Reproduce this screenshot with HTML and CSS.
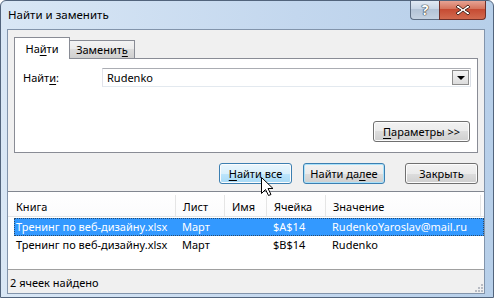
FILE: index.html
```html
<!DOCTYPE html>
<html lang="ru">
<head>
  <meta charset="UTF-8">
  <title>Найти и заменить</title>
  <link rel="stylesheet" href="styles.css">
</head>
<body>

<div class="window">
  <!-- Title bar -->
  <div class="titlebar">
    <span class="title">Найти и заменить</span>
    <div class="caption-buttons">
      <span class="cap-help">?</span>
      <span class="cap-close">
        <svg width="16" height="12" viewBox="0 0 16 12">
          <path d="M3 1 L8 5 L13 1 L15 3 L10 6 L15 9 L13 11 L8 7 L3 11 L1 9 L6 6 L1 3 Z" fill="#fff" stroke="#4b2a22" stroke-width="1"/>
        </svg>
      </span>
    </div>
  </div>

  <!-- Client area -->
  <div class="client">
    <div class="tabs-area">
      <div class="tab-strip">
        <div class="tab active">На<u>й</u>ти</div>
        <div class="tab">Заменит<u>ь</u></div>
      </div>
      <div class="tab-panel">
        <div class="find-row">
          <label class="find-label">Найт<u>и</u>:</label>
          <div class="combo">
            <span class="combo-text">Rudenko</span>
            <span class="combo-arrow"></span>
          </div>
        </div>
        <div class="options-row">
          <button class="btn btn-options"><u>П</u>араметры &gt;&gt;</button>
        </div>
      </div>
    </div>

    <div class="actions">
      <button class="btn btn-hover btn-find-all"><u>Н</u>айти все</button>
      <button class="btn btn-default btn-find-next">Найти да<u>л</u>ее</button>
      <button class="btn btn-close">Закрыть</button>
    </div>

    <!-- Results -->
    <div class="results">
      <div class="results-head">
        <div class="hcell c1">Книга</div>
        <div class="hcell">Лист</div>
        <div class="hcell">Имя</div>
        <div class="hcell">Ячейка</div>
        <div class="hcell">Значение</div>
        <div class="hcell filler"></div>
      </div>
      <div class="row selected">
        <div class="cell c1">Тренинг по веб-дизайну.xlsx</div>
        <div class="cell">Март</div>
        <div class="cell"></div>
        <div class="cell">$A$14</div>
        <div class="cell">RudenkoYaroslav@mail.ru</div>
      </div>
      <div class="row">
        <div class="cell c1">Тренинг по веб-дизайну.xlsx</div>
        <div class="cell">Март</div>
        <div class="cell"></div>
        <div class="cell">$B$14</div>
        <div class="cell">Rudenko</div>
      </div>
    </div>

    <div class="status">
      <span>2 ячеек найдено</span>
      <svg class="grip" width="9" height="9" viewBox="0 0 9 9">
        <rect x="7" y="1" width="2" height="2" fill="#b8bcc4"/>
        <rect x="4" y="4" width="2" height="2" fill="#b8bcc4"/>
        <rect x="7" y="4" width="2" height="2" fill="#b8bcc4"/>
        <rect x="1" y="7" width="2" height="2" fill="#b8bcc4"/>
        <rect x="4" y="7" width="2" height="2" fill="#b8bcc4"/>
        <rect x="7" y="7" width="2" height="2" fill="#b8bcc4"/>
      </svg>
    </div>
  </div>

  <!-- Mouse pointer over "Найти все" -->
  <svg class="pointer" width="14" height="20" viewBox="0 0 14 20">
    <path d="M0.5 0.5 L0.5 16.5 L4.5 12.5 L7.5 18.5 L10 17.5 L7 11.5 L12 11.5 Z" fill="#fff" stroke="#000" stroke-width="1" stroke-linejoin="miter"/>
  </svg>
</div>

</body>
</html>
```

FILE: styles.css
```css
body {
  margin: 0;
  font-family: "Noto Sans", "Open Sans", sans-serif;
  font-size: 11px;
  color: #000;
}

u {
  text-decoration: underline;
  text-underline-offset: 2px;
}

/* Window frame */
.window {
  position: relative;
  width: 494px;
  height: 298px;
  box-sizing: border-box;
  border: 1px solid #52647c;
  border-radius: 6px 6px 0 0;
  background: linear-gradient(to right, #d9e7f5, #c3d7ee 60%, #b7cfe9);
  padding: 0 8px 3px 6px;
  display: flex;
  flex-direction: column;
  overflow: hidden;
}

/* Title bar */
.titlebar {
  height: 28px;
  display: flex;
  align-items: flex-start;
}

.title {
  flex: 1;
  padding: 6px 0 0 1px;
  line-height: 16px;
  font-size: 11.5px;
}

.caption-buttons {
  display: flex;
  margin: -1px -1px 0 0;
}

.cap-help,
.cap-close {
  height: 20px;
  box-sizing: border-box;
  display: flex;
  align-items: center;
  justify-content: center;
  border: 1px solid #5d6d83;
  border-top: none;
}

.cap-help {
  width: 29px;
  border-radius: 0 0 0 4px;
  border-right: none;
  background: linear-gradient(#e4ecf5, #c9d6e6 45%, #b3c3d6 50%, #c5d2e2);
  color: #fff;
  font-weight: bold;
  font-size: 14px;
  text-shadow: 0 0 1px #333, 0 0 1px #333, 0 0 1px #333;
}

.cap-close {
  width: 47px;
  border-radius: 0 0 4px 0;
  border-color: #70302a;
  background: linear-gradient(#e9a99b, #d6755e 45%, #c64b33 50%, #d26a4f);
}

/* Client area */
.client {
  flex: 1;
  background: #f0f0f0;
  border: 1px solid #8294ab;
  display: flex;
  flex-direction: column;
}

/* Tabs */
.tabs-area {
  margin: 7px 6px 0;
}

.tab-strip {
  height: 21px;
  display: flex;
  align-items: flex-end;
  position: relative;
  z-index: 1;
}

.tab {
  width: 66px;
  height: 18px;
  box-sizing: border-box;
  margin-left: -1px;
  padding-top: 1px;
  line-height: 16px;
  text-align: center;
  border: 1px solid #898c95;
  border-bottom: none;
  background: linear-gradient(#f3f3f3, #ebebeb 50%, #dcdcdc 50%, #cfcfcf);
}

.tab.active {
  width: 56px;
  height: 22px;
  margin-left: 0;
  margin-bottom: -1px;
  padding-top: 3px;
  background: #fff;
  position: relative;
  z-index: 2;
}

.tab-panel {
  height: 95px;
  box-sizing: border-box;
  background: #fff;
  border: 1px solid #898c95;
  padding: 9px 6px 10px 8px;
}

.find-row {
  display: flex;
  align-items: center;
  height: 19px;
}

.find-label {
  width: 79px;
}

.combo {
  flex: 1;
  height: 19px;
  box-sizing: border-box;
  border: 1px solid #abadb3;
  border-color: #abadb3 #dbdfe6 #e3e9ef #e2e3ea;
  display: flex;
  align-items: center;
  padding: 1px;
}

.combo-text {
  flex: 1;
  padding-left: 3px;
  line-height: 15px;
}

.combo-arrow {
  width: 17px;
  height: 15px;
  box-sizing: border-box;
  border: 1px solid #8c8c8c;
  background: linear-gradient(#f4f4f4, #dcdcdc);
  position: relative;
}

.combo-arrow::after {
  content: "";
  position: absolute;
  left: 4px;
  top: 5px;
  border-left: 4px solid transparent;
  border-right: 4px solid transparent;
  border-top: 4px solid #000;
}

.options-row {
  display: flex;
  justify-content: flex-end;
  margin-top: 34px;
  padding-right: 1px;
}

/* Buttons */
.btn {
  height: 21px;
  box-sizing: border-box;
  font-family: inherit;
  font-size: 11px;
  color: #000;
  padding: 0;
  border: 1px solid #707070;
  border-radius: 3px;
  background: linear-gradient(#f2f2f2, #ebebeb 50%, #dddddd 50%, #cfcfcf);
  box-shadow: inset 0 0 0 1px #fcfcfc;
}

.btn-options {
  width: 97px;
}

.btn-hover {
  border-color: #3c7fb1;
  background: linear-gradient(#eaf6fd, #d9f0fc 50%, #bee6fd 50%, #a7d9f5);
}

.btn-default {
  border-color: #3c7fb1;
  box-shadow: inset 0 0 0 1px #a9e1fa;
}

.actions {
  display: flex;
  justify-content: flex-end;
  margin-top: 10px;
  padding-right: 6px;
}

.btn-find-all {
  width: 73px;
}

.btn-find-next {
  width: 82px;
  margin-left: 11px;
}

.btn-close {
  width: 73px;
  margin-left: 20px;
}

/* Results list */
.results {
  margin-top: 7px;
  height: 78px;
  box-sizing: border-box;
  border-top: 1px solid #828790;
  background: #fff;
  padding-left: 6px;
}

.results-head {
  display: grid;
  grid-template-columns: 162px 49px 42px 59px 155px 1fr;
  height: 25px;
  box-sizing: border-box;
  margin-left: -6px;
  padding-left: 6px;
  border-bottom: 1px solid #e5e5e5;
  background: linear-gradient(#fff, #fbfbfc);
}

.hcell {
  margin-top: 3px;
  padding: 4px 0 0 7px;
  line-height: 16px;
  border-right: 1px solid #e5e5e5;
}

.hcell.c1 {
  padding-left: 2px;
}

.hcell.filler {
  border-right: none;
}

.row {
  display: grid;
  grid-template-columns: 162px 49px 42px 59px 1fr;
  height: 18px;
  line-height: 18px;
}

.results-head + .row {
  margin-top: 1px;
}

.cell {
  padding-left: 6px;
  white-space: nowrap;
}

.cell.c1 {
  padding-left: 2px;
}

.row.selected {
  background: #3399ff;
  color: #fff;
  outline: 1px dotted #2a4a6a;
  outline-offset: -1px;
}

/* Status bar */
.status {
  height: 24px;
  box-sizing: border-box;
  border-top: 1px solid #a0a0a0;
  display: flex;
  align-items: center;
  padding: 1px 0 0 2px;
  position: relative;
}

.grip {
  position: absolute;
  right: 1px;
  bottom: 1px;
}

/* Mouse pointer overlay */
.pointer {
  position: absolute;
  left: 260px;
  top: 176px;
}
```
